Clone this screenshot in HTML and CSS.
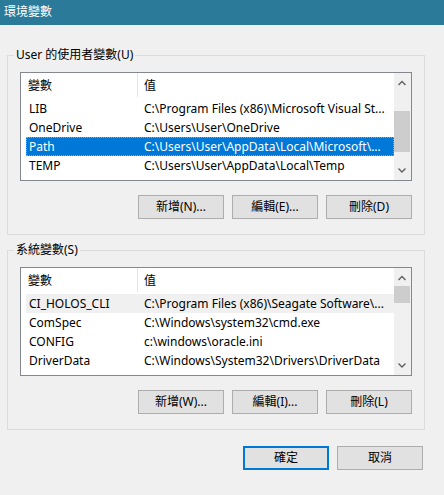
FILE: index.html
```html
<!DOCTYPE html>
<html lang="zh-Hant">
<head>
<meta charset="utf-8">
<title>環境變數</title>
<link rel="stylesheet" href="styles.css">
</head>
<body>
<div class="window">
  <div class="titlebar">環境變數</div>

  <fieldset class="group">
    <legend>User 的使用者變數(U)</legend>
    <div class="listview">
      <div class="lv-body">
        <div class="lv-header">
          <div class="col-name">變數</div>
          <div class="col-value">值</div>
        </div>
        <div class="lv-row"><div class="col-name">LIB</div><div class="col-value">C:\Program Files (x86)\Microsoft Visual St...</div></div>
        <div class="lv-row"><div class="col-name">OneDrive</div><div class="col-value">C:\Users\User\OneDrive</div></div>
        <div class="lv-row selected"><div class="col-name">Path</div><div class="col-value">C:\Users\User\AppData\Local\Microsoft\...</div></div>
        <div class="lv-row"><div class="col-name">TEMP</div><div class="col-value">C:\Users\User\AppData\Local\Temp</div></div>
      </div>
      <div class="vscroll">
        <div class="sb-btn"><svg width="17" height="17" viewBox="0 0 17 17"><polyline points="4.5,12 8,8.5 11.5,12" /></svg></div>
        <div class="sb-track"><div class="sb-thumb" style="margin-top:21px;height:41px"></div></div>
        <div class="sb-btn"><svg width="17" height="17" viewBox="0 0 17 17"><polyline points="4.5,5.5 8,9 11.5,5.5" /></svg></div>
      </div>
    </div>
    <div class="btn-row">
      <button class="btn">新增(N)...</button>
      <button class="btn">編輯(E)...</button>
      <button class="btn">刪除(D)</button>
    </div>
  </fieldset>

  <fieldset class="group group-system">
    <legend>系統變數(S)</legend>
    <div class="listview">
      <div class="lv-body">
        <div class="lv-header">
          <div class="col-name">變數</div>
          <div class="col-value">值</div>
        </div>
        <div class="lv-row hot"><div class="col-name">CI_HOLOS_CLI</div><div class="col-value">C:\Program Files (x86)\Seagate Software\...</div></div>
        <div class="lv-row"><div class="col-name">ComSpec</div><div class="col-value">C:\Windows\system32\cmd.exe</div></div>
        <div class="lv-row"><div class="col-name">CONFIG</div><div class="col-value">c:\windows\oracle.ini</div></div>
        <div class="lv-row"><div class="col-name">DriverData</div><div class="col-value">C:\Windows\System32\Drivers\DriverData</div></div>
      </div>
      <div class="vscroll">
        <div class="sb-btn"><svg width="17" height="17" viewBox="0 0 17 17"><polyline points="4.5,12 8,8.5 11.5,12" /></svg></div>
        <div class="sb-track"><div class="sb-thumb" style="margin-top:1px;height:17px"></div></div>
        <div class="sb-btn"><svg width="17" height="17" viewBox="0 0 17 17"><polyline points="4.5,5.5 8,9 11.5,5.5" /></svg></div>
      </div>
    </div>
    <div class="btn-row">
      <button class="btn">新增(W)...</button>
      <button class="btn">編輯(I)...</button>
      <button class="btn">刪除(L)</button>
    </div>
  </fieldset>

  <div class="dialog-buttons">
    <button class="btn btn-default">確定</button>
    <button class="btn">取消</button>
  </div>
</div>
</body>
</html>
```

FILE: styles.css
```css
* { box-sizing: border-box; }

html, body {
  margin: 0;
  padding: 0;
  background: #f0f0f0;
}

body {
  font-family: "Noto Sans", "Noto Sans CJK TC", sans-serif;
  font-size: 12px;
  color: #000;
}

.window {
  width: 444px;
  height: 495px;
  background: #f0f0f0;
  overflow: hidden;
}

.titlebar {
  height: 25px;
  line-height: 23px;
  padding-left: 4px;
  background: #2b7a9a;
  color: #fff;
  font-size: 12px;
}

.group {
  margin: 22px 19px 0 7px;
  padding: 9px 12px 15px 12px;
  border: 1px solid #dcdcdc;
  min-inline-size: 0;
}

.group-system {
  margin-top: 7px;
}

.group legend {
  padding: 0 2px;
  margin-left: -6px;
  height: 16px;
  line-height: 16px;
  font-size: 12px;
}

.listview {
  display: flex;
  height: 109px;
  border: 1px solid #828790;
  background: #fff;
}

.lv-body {
  flex: 1;
  min-width: 0;
  overflow: hidden;
}

.lv-header {
  display: flex;
  height: 26px;
  line-height: 26px;
  background: linear-gradient(#e5e5e5, #e5e5e5) no-repeat 116px 0 / 1px 24px;
}

.lv-header .col-name {
  width: 123px;
  padding-left: 7px;
  flex: none;
}

.lv-row {
  display: flex;
  height: 19px;
  line-height: 19px;
  margin-left: 5px;
  white-space: nowrap;
}

.lv-row .col-name {
  width: 118px;
  padding-left: 3px;
  flex: none;
  overflow: hidden;
}

.col-value {
  flex: 1;
  min-width: 0;
  overflow: hidden;
  white-space: nowrap;
}

.lv-row.selected {
  background: #0078d7;
  color: #fff;
  outline: 1px dotted #ff8728;
  outline-offset: -1px;
}

.lv-row.hot {
  background: #f0f0f0;
}

.vscroll {
  width: 17px;
  flex: none;
  display: flex;
  flex-direction: column;
  background: #f0f0f0;
}

.sb-btn {
  height: 17px;
  flex: none;
}

.sb-btn svg {
  display: block;
}

.sb-btn polyline {
  fill: none;
  stroke: #606060;
  stroke-width: 1.4;
}

.sb-track {
  flex: 1;
}

.sb-thumb {
  width: 16px;
  background: #cdcdcd;
}

.btn-row {
  display: flex;
  justify-content: flex-end;
  gap: 8px;
  margin-top: 14px;
}

.btn {
  width: 86px;
  height: 24px;
  padding: 0;
  margin: 0;
  background: #e1e1e1;
  border: 1px solid #adadad;
  font-family: "Noto Sans", "Noto Sans CJK TC", sans-serif;
  font-size: 12px;
  color: #000;
  line-height: 20px;
}

.btn-default {
  border: 2px solid #0078d7;
}

.dialog-buttons {
  display: flex;
  justify-content: flex-end;
  gap: 8px;
  margin-top: 16px;
  padding-right: 21px;
}
```
